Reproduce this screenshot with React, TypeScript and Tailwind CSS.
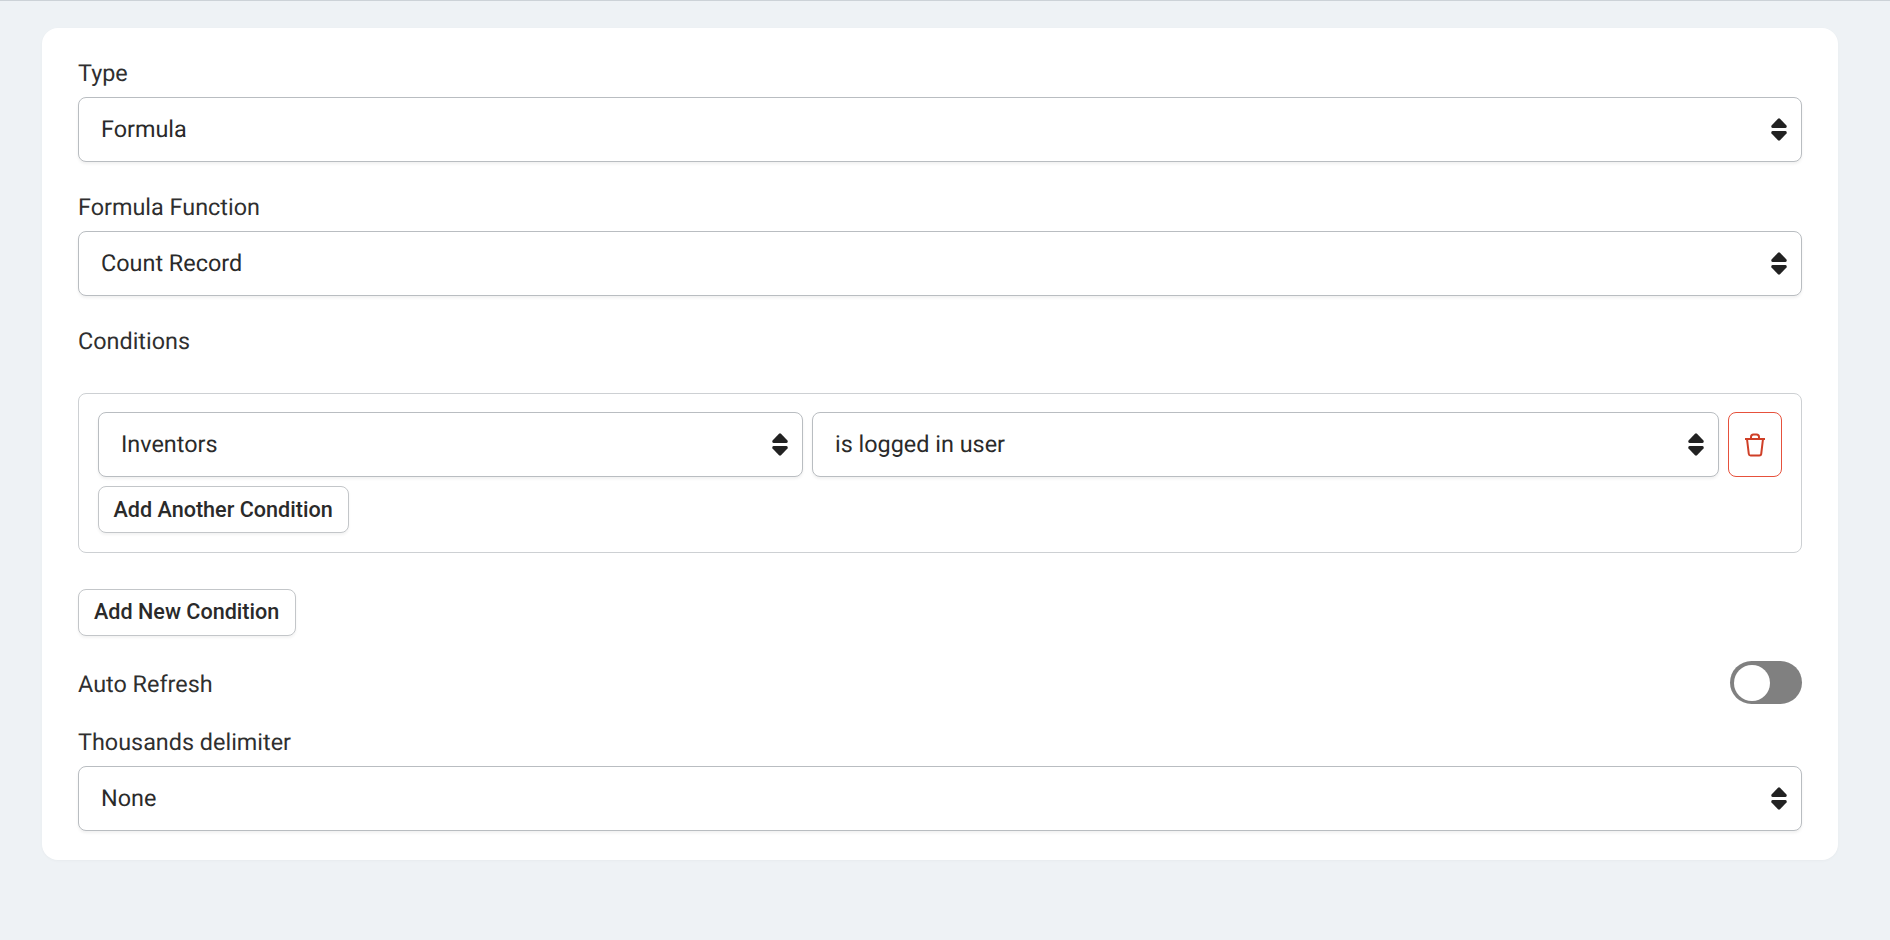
const font = { fontFamily: "Roboto, sans-serif" };

function Arrows() {
  return (
    <svg width="16" height="23" viewBox="0 0 16 23" className="shrink-0 text-[#222]" fill="currentColor">
      <path d="M7 0.7 Q8 0 9 0.7 L15.5 7.6 Q16.3 9.8 14.5 10 H1.5 Q-0.3 9.8 0.5 7.6 Z" />
      <path d="M7 22.3 Q8 23 9 22.3 L15.5 15.4 Q16.3 13.2 14.5 13 H1.5 Q-0.3 13.2 0.5 15.4 Z" />
    </svg>
  );
}

function Select({ value, className = "" }: { value: string; className?: string }) {
  return (
    <div
      className={`flex h-[65px] items-center justify-between rounded-[8px] border border-[#b9bdc1] bg-white pl-[22px] pr-[14px] text-[23.4px] text-[#2a2a2a] shadow-[0_2px_3px_rgba(0,0,0,0.06)] ${className}`}
    >
      <span>{value}</span>
      <Arrows />
    </div>
  );
}

function Label({ children }: { children: string }) {
  return <div className="mb-[5px] h-[32px] text-[23.4px] leading-[27px] text-[#2f2f2f]">{children}</div>;
}

function Button({ children, className = "" }: { children: string; className?: string }) {
  return (
    <button className={`flex h-[47px] items-center rounded-[8px] border border-[#c3c6c9] bg-white text-[21.6px] font-medium text-[#2a2a2a] shadow-[0_2px_3px_rgba(0,0,0,0.05)] ${className}`}>
      {children}
    </button>
  );
}

export default function App() {
  return (
    <div style={font} className="h-[940px] overflow-hidden border-t border-[#ccd2d7] bg-[#eef2f5] [text-rendering:geometricPrecision]">
      <div className="ml-[42px] mr-[52px] mt-[27px] rounded-[16px] bg-white px-[36px] pb-[29px] pt-[32px] shadow-[0_1px_3px_rgba(0,0,0,0.03)]">
        <Label>Type</Label>
        <Select value="Formula" />
        <div className="mt-[32px]">
          <Label>Formula Function</Label>
          <Select value="Count Record" />
        </div>
        <div className="mt-[32px]">
          <Label>Conditions</Label>
        </div>
        <div className="mt-[33px] h-[160px] rounded-[8px] border border-[#cdd0d3] px-[19px] pt-[18px]">
          <div className="flex gap-[9px]">
            <Select value="Inventors" className="w-[705px] shrink-0" />
            <Select value="is logged in user" className="flex-1" />
            <button className="flex h-[65px] w-[54px] shrink-0 items-center justify-center rounded-[8px] border border-[#e6513c] bg-white">
              <svg width="22" height="24" viewBox="0 0 22 24" fill="none" stroke="#cf3f27" strokeWidth="2">
                <path d="M1 6 H21" />
                <path d="M3 6 L4.8 21 Q5 22.5 6.6 22.5 H15.4 Q17 22.5 17.2 21 L19 6" />
                <path d="M7 6 V4 Q7 1.5 9.5 1.5 H12.5 Q15 1.5 15 4 V6" />
              </svg>
            </button>
          </div>
          <div className="mt-[9px] flex">
            <Button className="pl-[14.5px] pr-[15.5px] pt-[1px]">Add Another Condition</Button>
          </div>
        </div>
        <div className="mt-[36px] flex">
          <Button className="pl-[15px] pr-[16px]">Add New Condition</Button>
        </div>
        <div className="mt-[25px] flex h-[43px] items-center justify-between">
          <span className="pt-[2px] text-[23.4px] leading-[32px] text-[#2f2f2f]">Auto Refresh</span>
          <div className="flex h-[43px] w-[72px] items-center rounded-full bg-[#808080] pl-[4px]">
            <div className="h-[36px] w-[36px] rounded-full bg-white" />
          </div>
        </div>
        <div className="mt-[25px]">
          <Label>Thousands delimiter</Label>
          <Select value="None" />
        </div>
      </div>
    </div>
  );
}
